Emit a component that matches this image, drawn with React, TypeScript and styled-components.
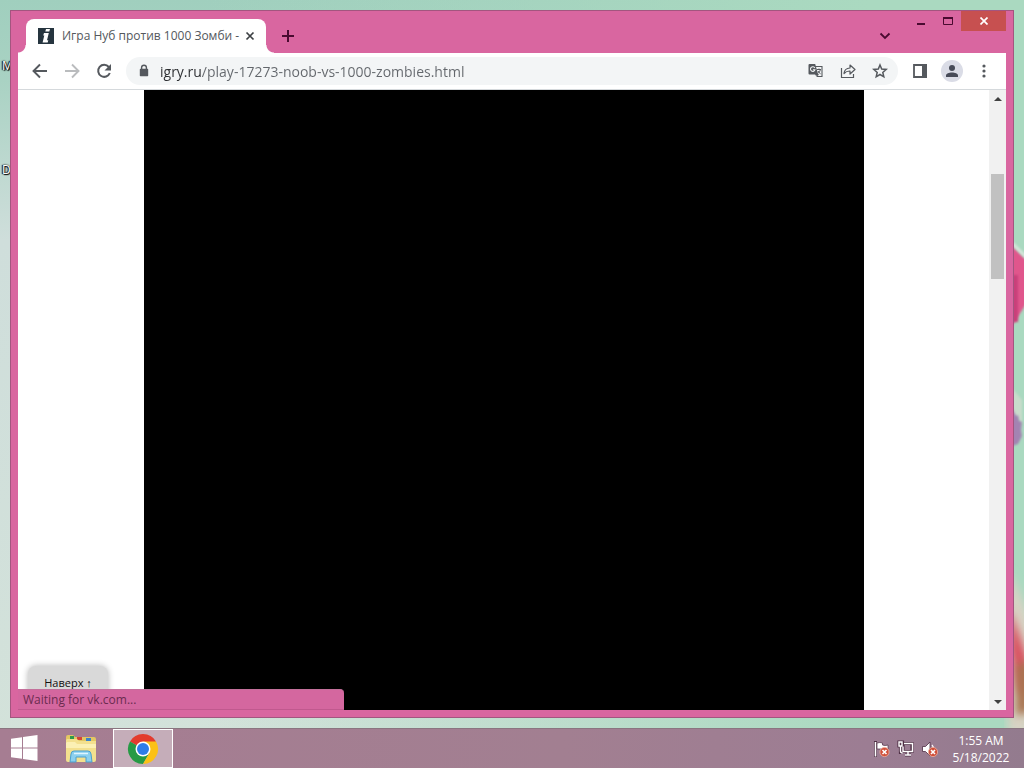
import React from "react";
import styled, { createGlobalStyle } from "styled-components";

const GlobalStyle = createGlobalStyle`
  * { box-sizing: border-box; }
  html, body { margin: 0; padding: 0; }
  body { font-family: "Open Sans", "Noto Sans", sans-serif; font-size: 12px; }
  button { font: inherit; color: inherit; background: none; border: 0; padding: 0; cursor: default; }
`;

const Desktop = styled.div`
  min-height: 100vh;
  display: flex;
  flex-direction: column;
  background: linear-gradient(180deg, #a0cfbe 0, #a9d2c3 80px, #cfdedb 240px, #d3e2da 100%);
`;

const DesktopArea = styled.main`
  position: relative;
  flex: 1;
  display: flex;
  padding: 10px;
  overflow: hidden;
  background: linear-gradient(90deg, rgba(170, 221, 190, 0) 20%, #aad9c0 85%);
`;

const Wallpaper = styled.svg`
  position: absolute;
  top: 0;
  right: 0;
  width: 20px;
  height: 100%;
`;

const DesktopLabel = styled.span<{ $top: number }>`
  position: absolute;
  left: 2px;
  top: ${(p) => p.$top}px;
  font-size: 12px;
  line-height: 16px;
  color: #fff;
  text-shadow: 0 0 2px #000, 1px 1px 1px #000, -1px 0 1px #000;
`;

const Window = styled.section`
  position: relative;
  flex: 1;
  min-width: 0;
  display: flex;
  flex-direction: column;
  padding: 0 7px 7px;
  background: #d966a0;
  border: 1px solid #a3557f;
`;

const TitleBar = styled.header`
  display: flex;
  height: 42px;
  padding-left: 8px;
`;

const Tab = styled.div`
  position: relative;
  display: flex;
  align-items: center;
  width: 240px;
  height: 34px;
  margin-top: 8px;
  padding: 0 8px 0 12px;
  background: #fff;
  border-radius: 8px 8px 0 0;
  color: #54585c;

  &::before,
  &::after {
    content: "";
    position: absolute;
    bottom: 0;
    width: 8px;
    height: 8px;
  }
  &::before {
    left: -8px;
    background: radial-gradient(circle at 0 0, transparent 7px, #fff 8px);
  }
  &::after {
    right: -8px;
    background: radial-gradient(circle at 100% 0, transparent 7px, #fff 8px);
  }
`;

const TabTitle = styled.span`
  flex: 1;
  min-width: 0;
  margin-left: 8px;
  overflow: hidden;
  white-space: nowrap;
  line-height: 16px;
`;

const IconButton = styled.button<{ $w?: number; $h?: number }>`
  display: flex;
  flex: none;
  align-items: center;
  justify-content: center;
  width: ${(p) => p.$w ?? 28}px;
  height: ${(p) => p.$h ?? 28}px;
`;

const TabTools = styled.div`
  display: flex;
  flex: 1;
  justify-content: space-between;
  padding: 11px 8px 0 8px;
`;

const CaptionButtons = styled.div`
  display: flex;
  align-items: flex-start;
`;

const CloseButton = styled(IconButton)`
  background: #c75050;
`;

const Toolbar = styled.nav`
  display: flex;
  align-items: center;
  gap: 4px;
  height: 37px;
  padding: 0 8px;
  background: #fff;
  border-bottom: 1px solid #d5d9dc;
`;

const AddressBar = styled.form`
  display: flex;
  flex: 1;
  align-items: center;
  gap: 4px;
  min-width: 0;
  height: 28px;
  margin: 0 4px;
  padding: 0 4px 0 10px;
  background: #f3f5f6;
  border-radius: 14px;
`;

const AddressInput = styled.input`
  flex: 1;
  min-width: 0;
  height: 24px;
  margin-left: 4px;
  padding: 0;
  border: 0;
  outline: 0;
  font: 14px/20px "Open Sans", "Noto Sans", sans-serif;
  color: #5f6368;
  background: linear-gradient(90deg, #2b2d30 42px, #63676c 42px);
  -webkit-background-clip: text;
  background-clip: text;
  -webkit-text-fill-color: transparent;
`;

const Avatar = styled.span`
  display: flex;
  align-items: center;
  justify-content: center;
  width: 22px;
  height: 22px;
  border-radius: 50%;
  background: #dadce6;
`;

const Viewport = styled.div`
  position: relative;
  display: flex;
  flex: 1;
  min-height: 0;
  background: #fff;
`;

const Page = styled.div`
  position: relative;
  display: flex;
  flex: 1;
  justify-content: center;
  min-width: 0;
  overflow: hidden;
`;

const Game = styled.div`
  width: 720px;
  max-width: 100%;
  background: #000;
`;

const ToTop = styled.button`
  position: absolute;
  left: 10px;
  bottom: 10px;
  width: 80px;
  height: 34px;
  border-radius: 8px;
  background: #d9d9d9;
  box-shadow: 0 0 6px rgba(0, 0, 0, 0.3);
  font-size: 11px;
  line-height: 16px;
  color: #111;
`;

const ScrollTrack = styled.div`
  display: flex;
  flex-direction: column;
  align-items: center;
  width: 17px;
  background: #f1f1f1;
`;

const ScrollSpace = styled.div<{ $grow: number }>`
  flex: ${(p) => p.$grow} 1 0;
`;

const ScrollThumb = styled(ScrollSpace)`
  width: 13px;
  background: #c1c1c1;
`;

const StatusBubble = styled.div`
  position: absolute;
  left: 0;
  bottom: 0;
  width: 33%;
  height: 21px;
  padding-left: 5px;
  background: #d4679f;
  border-top: 1px solid #c4709b;
  border-bottom: 1px solid #c0598e;
  border-radius: 0 4px 0 0;
  line-height: 20px;
  color: #6b2c4f;
`;

const Taskbar = styled.footer`
  display: flex;
  height: 40px;
  background: linear-gradient(90deg, #a67d92, #a27f91 55%, #9c7d93 85%, #937b8e);
  border-top: 1px solid #8a7580;
`;

const TaskButton = styled(IconButton)<{ $active?: boolean }>`
  border: ${(p) => (p.$active ? "1px solid #fff" : "0")};
  background: ${(p) => (p.$active ? "#c5adb9" : "none")};
`;

const Tray = styled.div`
  display: flex;
  align-items: center;
  margin-left: auto;
  padding-right: 4px;
`;

const Clock = styled.button`
  width: 78px;
  text-align: center;
  color: #fff;
  line-height: 17px;
`;

const grey = "#55595e";
const plum = "#4a0a30";
const outline = "#4f2f45";

const TrayCross = ({ x, y }: { x: number; y: number }) => (
  <g>
    <circle cx={x} cy={y} r="4.600" fill="#d0503a" stroke="#f0b0a0" strokeWidth=".8" />
    <path d={`M${x - 2} ${y - 2}l4 4m0-4l-4 4`} stroke="#fff" strokeWidth="1.600" />
  </g>
);

export default function App() {
  return (
    <Desktop>
      <GlobalStyle />
      <DesktopArea>
        <Wallpaper viewBox="0 0 20 728" preserveAspectRatio="none" aria-hidden="true">
          <defs>
            <filter id="soft" x="-50%" y="-20%" width="200%" height="140%">
              <feGaussianBlur stdDeviation="1.2" />
            </filter>
            <filter id="haze" x="-100%" y="-20%" width="300%" height="140%">
              <feGaussianBlur stdDeviation="4" />
            </filter>
          </defs>
          <path d="M8 246L22 260V304L8 326Z" fill="#e0568c" filter="url(#soft)" />
          <path d="M8 275H14V322H8Z" fill="#c9407a" filter="url(#soft)" />
          <path d="M8 243L22 257" stroke="#d9e6dc" strokeWidth="3" filter="url(#soft)" />
          <path d="M8 388L18 400V424L8 412Z" fill="#c8dccb" filter="url(#soft)" />
          <path d="M8 408l4 8 2-1 1 6 3 1-1 8 1 6-4 8-6 2Z" fill="#a383b2" filter="url(#soft)" />
          <path d="M4 570Q16 590 26 620V735H4Z" fill="#d8d3c4" filter="url(#haze)" />
          <path d="M6 610Q16 635 24 660V700L14 690L6 650Z" fill="#d9505e" filter="url(#haze)" />
          <path d="M12 665L26 660V712L12 716Z" fill="#a8734f" filter="url(#haze)" />
        </Wallpaper>
        <DesktopLabel $top={58}>M</DesktopLabel>
        <DesktopLabel $top={162}>D</DesktopLabel>

        <Window aria-label="Browser">
          <TitleBar>
            <Tab>
              <svg width="16" height="16" viewBox="0 0 16 16" aria-hidden="true">
                <path fill="#26353f" d="M0 0h16v16H0z" />
                <path fill="#fff" d="M8 1h4l-.7 2.600h-4zM6 5h4.800L9 12.200h1.300L9.700 14.600H4.600L6.300 7.400H5.200z" />
              </svg>
              <TabTitle>Игра Нуб против 1000 Зомби -</TabTitle>
              <IconButton $w={16} $h={16} aria-label="Close tab">
                <svg width="10" height="10" viewBox="0 0 10 10">
                  <path d="M1.500 1.500l7 7M8.500 1.500l-7 7" stroke="#3c4043" strokeWidth="1.700" />
                </svg>
              </IconButton>
            </Tab>
            <TabTools>
              <IconButton aria-label="New tab">
                <svg width="12" height="12" viewBox="0 0 12 12">
                  <path d="M6 0v12M0 6h12" stroke={plum} strokeWidth="2" />
                </svg>
              </IconButton>
              <IconButton aria-label="Search tabs">
                <svg width="12" height="8" viewBox="0 0 12 8">
                  <path d="M1.500 1.500L6 6l4.500-4.500" fill="none" stroke={plum} strokeWidth="1.800" />
                </svg>
              </IconButton>
            </TabTools>
            <CaptionButtons>
              <IconButton $w={27} $h={20} aria-label="Minimize">
                <svg width="10" height="10" viewBox="0 0 10 10">
                  <path d="M1 7h8v2H1z" fill={plum} />
                </svg>
              </IconButton>
              <IconButton $w={27} $h={20} aria-label="Maximize">
                <svg width="10" height="10" viewBox="0 0 10 10">
                  <path d="M.5 1.500h9v7h-9z" fill="none" stroke={plum} />
                  <path d="M0 1h10v2H0z" fill={plum} />
                </svg>
              </IconButton>
              <CloseButton $w={45} $h={20} aria-label="Close">
                <svg width="8" height="8" viewBox="0 0 8 8">
                  <path d="M.5.5l7 7m0-7l-7 7" stroke="#fff" strokeWidth="1.700" />
                </svg>
              </CloseButton>
            </CaptionButtons>
          </TitleBar>

          <Toolbar>
            <IconButton aria-label="Back">
              <svg width="16" height="16" viewBox="0 0 16 16">
                <path d="M15 8H2M8 1.500L1.500 8 8 14.500" fill="none" stroke={grey} strokeWidth="1.900" />
              </svg>
            </IconButton>
            <IconButton aria-label="Forward">
              <svg width="16" height="16" viewBox="0 0 16 16">
                <path d="M1 8h13M8 1.500L14.500 8 8 14.500" fill="none" stroke="#babcbe" strokeWidth="1.900" />
              </svg>
            </IconButton>
            <IconButton aria-label="Reload">
              <svg width="16" height="16" viewBox="0 0 16 16">
                <path d="M12.800 4A6 6 0 1 0 13.800 10" fill="none" stroke={grey} strokeWidth="2" />
                <path d="M15 1v6.500H8.500z" fill={grey} />
              </svg>
            </IconButton>
            <AddressBar>
              <svg width="16" height="16" viewBox="0 0 16 16" aria-hidden="true">
                <path d="M4.500 6.500h7v6h-7z" fill={grey} stroke={grey} strokeWidth="1.400" strokeLinejoin="round" />
                <path d="M5.600 6.500V4.600a2.400 2.400 0 0 1 4.800 0v1.900" fill="none" stroke={grey} strokeWidth="1.400" />
              </svg>
              <AddressInput aria-label="Address" defaultValue="igry.ru/play-17273-noob-vs-1000-zombies.html" />
              <IconButton type="button" aria-label="Translate">
                <svg width="16" height="16" viewBox="0 0 16 16">
                  <path d="M6.500 3.500h7.500v10H9" fill="none" stroke={grey} strokeWidth="1.100" />
                  <path d="M1.500 1h5.700l3 10.500H1.500a1 1 0 0 1-1-1V2a1 1 0 0 1 1-1z" fill={grey} />
                  <path d="M6.800 4.900A2.300 2.300 0 1 0 7 6.700H4.900" fill="none" stroke="#f1f3f4" strokeWidth="1.100" />
                  <path d="M9 6.500h4M11 5.500v1M12.500 6.500q-.8 2.600-2.300 3.800M10 8q1 2 2.600 2.800M7.500 11.500l1.500 2 1.300-2z" fill="none" stroke={grey} />
                </svg>
              </IconButton>
              <IconButton type="button" aria-label="Share">
                <svg width="16" height="16" viewBox="0 0 16 16">
                  <path d="M1.500 5v9.500h12V11" fill="none" stroke={grey} strokeWidth="1.200" />
                  <path d="M4 10.500Q4.500 5.300 10 5V2l5 4.500-5 4.500V8Q6.500 7.800 4 10.500z" fill="none" stroke={grey} strokeWidth="1.200" strokeLinejoin="round" />
                </svg>
              </IconButton>
              <IconButton type="button" aria-label="Bookmark">
                <svg width="16" height="16" viewBox="0 0 16 16">
                  <path d="M8 2l1.700 4 4.500.4-3.400 3 1 4.400L8 11.500l-3.800 2.300 1-4.400-3.400-3 4.500-.4z" fill="none" stroke={grey} strokeWidth="1.500" />
                </svg>
              </IconButton>
            </AddressBar>
            <IconButton aria-label="Side panel">
              <svg width="14" height="14" viewBox="0 0 14 14">
                <path d="M1 1h12v12H1z" fill="none" stroke={grey} strokeWidth="1.800" />
                <path d="M9 0h5v14H9z" fill={grey} />
              </svg>
            </IconButton>
            <IconButton aria-label="Profile">
              <Avatar>
                <svg width="12" height="12" viewBox="0 0 12 12">
                  <circle cx="6" cy="3" r="3" fill="#474b58" />
                  <path d="M0 12v-1.500C0 8.500 3 7.500 6 7.500s6 1 6 3V12z" fill="#474b58" />
                </svg>
              </Avatar>
            </IconButton>
            <IconButton aria-label="Menu">
              <svg width="4" height="14" viewBox="0 0 4 14">
                <g fill={grey}>
                  <circle cx="2" cy="2" r="1.600" />
                  <circle cx="2" cy="7" r="1.600" />
                  <circle cx="2" cy="12" r="1.600" />
                </g>
              </svg>
            </IconButton>
          </Toolbar>

          <Viewport>
            <Page>
              <Game />
              <ToTop>Наверх ↑</ToTop>
            </Page>
            <ScrollTrack>
              <IconButton $w={17} $h={17} aria-label="Scroll up">
                <svg width="8" height="4" viewBox="0 0 8 4"><path d="M0 4l4-4 4 4z" fill="#404040" /></svg>
              </IconButton>
              <ScrollSpace $grow={67} />
              <ScrollThumb $grow={105} />
              <ScrollSpace $grow={414} />
              <IconButton $w={17} $h={17} aria-label="Scroll down">
                <svg width="8" height="4" viewBox="0 0 8 4"><path d="M0 0l4 4 4-4z" fill="#404040" /></svg>
              </IconButton>
            </ScrollTrack>
            <StatusBubble role="status">Waiting for vk.com...</StatusBubble>
          </Viewport>
        </Window>
      </DesktopArea>

      <Taskbar>
        <TaskButton $w={48} $h={38} aria-label="Start">
          <svg width="28" height="28" viewBox="0 0 28 28">
            <path d="M1 4.800L12 3.200v10.300H1zM13 3L27.500 1v12.500H13zM1 14.500h11v10.300L1 23.200zM13 14.500h14.500V27L13 25z" fill="#fff" />
          </svg>
        </TaskButton>
        <TaskButton $w={65} $h={39} aria-label="File Explorer">
          <svg width="32" height="30" viewBox="0 0 32 30">
            <path d="M1 3q0-2 2-2h5l2 2h19q2 0 2 2v4H1z" fill="#e3c763" />
            <path d="M5 2h4v3H5z" fill="#2d9b4c" />
            <path d="M12 3h5v3h-5z" fill="#d34635" />
            <path d="M21 4h5v3h-5z" fill="#3a83c9" />
            <path d="M2 5h10l2 2h17v19q0 2-2 2H3q-2 0-2-2V6z" fill="#f3e08e" />
            <path d="M2 8h8l2 2h19v4H1V9z" fill="#fbf0b4" />
            <path d="M5 28l1-8q.3-3 3-3h14q2.700 0 3 3l1 8h-6v-5H11v5z" fill="#8bd0ee" stroke="#4a9fce" />
            <path d="M9 19.500h14" stroke="#dff5ff" strokeWidth="1.500" />
          </svg>
        </TaskButton>
        <TaskButton $w={60} $h={39} $active aria-label="Google Chrome">
          <svg width="32" height="32" viewBox="0 0 32 32">
            <path d="M16 16L3 8.500A15 15 0 0 1 29 8.500z" fill="#e33b2e" />
            <path d="M16 16L3 8.500A15 15 0 0 0 16 31L22.500 19.700z" fill="#269a45" />
            <path d="M16 8.500h13A15 15 0 0 1 16 31l6.500-11.300z" fill="#fbc116" />
            <circle cx="16" cy="16" r="7.500" fill="#fff" />
            <circle cx="16" cy="16" r="6" fill="#2f7de9" />
          </svg>
        </TaskButton>
        <Tray>
          <IconButton $w={24} aria-label="Action center">
            <svg width="18" height="18" viewBox="0 0 18 18">
              <path d="M2.500 1v16" stroke={outline} strokeWidth="3" />
              <path d="M2.500 2v14.500" stroke="#fff" strokeWidth="1.600" />
              <path d="M4 3q3-1 5.500 0v2q2.500 1 5.500 0v5q-3 1-6 0V9H4z" fill="#fff" stroke={outline} strokeWidth=".7" />
              <TrayCross x={11.5} y={12} />
            </svg>
          </IconButton>
          <IconButton $w={24} aria-label="Network">
            <svg width="18" height="18" viewBox="0 0 18 18">
              <g fill="none" stroke={outline} strokeWidth="3.200">
                <path d="M6 3.500h9v8H6zM8 15h6M3.500 6v8M2 2h3.500v4H2z" />
              </g>
              <g fill="none" stroke="#fff" strokeWidth="1.400">
                <path d="M7 3.500h8.500v8H6v-5M11 11.500V15M8 15h6M3.500 6v5q0 2 2 2" />
                <path d="M2 2h3v4H2z" />
              </g>
            </svg>
          </IconButton>
          <IconButton $w={24} aria-label="Volume">
            <svg width="18" height="18" viewBox="0 0 18 18">
              <path d="M1.500 6.500h3L9 2v14l-4.500-4.500h-3z" fill="#fff" stroke={outline} strokeWidth=".8" />
              <path d="M11 5q1.500 1.500 1.500 4" fill="none" stroke="#fff" strokeWidth="1.200" />
              <TrayCross x={12} y={12} />
            </svg>
          </IconButton>
          <Clock>1:55 AM<br />5/18/2022</Clock>
        </Tray>
      </Taskbar>
    </Desktop>
  );
}
